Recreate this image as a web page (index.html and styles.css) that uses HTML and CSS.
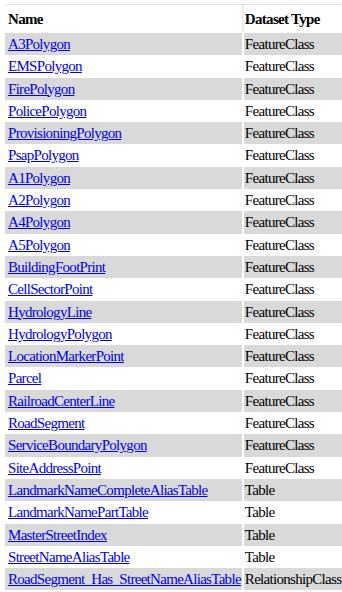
FILE: index.html
```html
<!DOCTYPE html>
<html>
<head>
<meta charset="utf-8">
<link rel="stylesheet" href="styles.css">
</head>
<body>
<table class="ds">
<thead>
<tr><th class="c1">Name</th><th class="c2">Dataset Type</th></tr>
</thead>
<tbody>
<tr class="odd"><td class="c1"><a href="#">A3Polygon</a></td><td class="c2">FeatureClass</td></tr>
<tr><td class="c1"><a href="#">EMSPolygon</a></td><td class="c2">FeatureClass</td></tr>
<tr class="odd"><td class="c1"><a href="#">FirePolygon</a></td><td class="c2">FeatureClass</td></tr>
<tr><td class="c1"><a href="#">PolicePolygon</a></td><td class="c2">FeatureClass</td></tr>
<tr class="odd"><td class="c1"><a href="#">ProvisioningPolygon</a></td><td class="c2">FeatureClass</td></tr>
<tr><td class="c1"><a href="#">PsapPolygon</a></td><td class="c2">FeatureClass</td></tr>
<tr class="odd"><td class="c1"><a href="#">A1Polygon</a></td><td class="c2">FeatureClass</td></tr>
<tr><td class="c1"><a href="#">A2Polygon</a></td><td class="c2">FeatureClass</td></tr>
<tr class="odd"><td class="c1"><a href="#">A4Polygon</a></td><td class="c2">FeatureClass</td></tr>
<tr><td class="c1"><a href="#">A5Polygon</a></td><td class="c2">FeatureClass</td></tr>
<tr class="odd"><td class="c1"><a href="#">BuildingFootPrint</a></td><td class="c2">FeatureClass</td></tr>
<tr><td class="c1"><a href="#">CellSectorPoint</a></td><td class="c2">FeatureClass</td></tr>
<tr class="odd"><td class="c1"><a href="#">HydrologyLine</a></td><td class="c2">FeatureClass</td></tr>
<tr><td class="c1"><a href="#">HydrologyPolygon</a></td><td class="c2">FeatureClass</td></tr>
<tr class="odd"><td class="c1"><a href="#">LocationMarkerPoint</a></td><td class="c2">FeatureClass</td></tr>
<tr><td class="c1"><a href="#">Parcel</a></td><td class="c2">FeatureClass</td></tr>
<tr class="odd"><td class="c1"><a href="#">RailroadCenterLine</a></td><td class="c2">FeatureClass</td></tr>
<tr><td class="c1"><a href="#">RoadSegment</a></td><td class="c2">FeatureClass</td></tr>
<tr class="odd"><td class="c1"><a href="#">ServiceBoundaryPolygon</a></td><td class="c2">FeatureClass</td></tr>
<tr><td class="c1"><a href="#">SiteAddressPoint</a></td><td class="c2">FeatureClass</td></tr>
<tr class="odd"><td class="c1"><a href="#">LandmarkNameCompleteAliasTable</a></td><td class="c2">Table</td></tr>
<tr><td class="c1"><a href="#">LandmarkNamePartTable</a></td><td class="c2">Table</td></tr>
<tr class="odd"><td class="c1"><a href="#">MasterStreetIndex</a></td><td class="c2">Table</td></tr>
<tr><td class="c1"><a href="#">StreetNameAliasTable</a></td><td class="c2">Table</td></tr>
<tr class="odd"><td class="c1"><a href="#">RoadSegment_Has_StreetNameAliasTable</a></td><td class="c2">RelationshipClass</td></tr>
</tbody>
</table>
</body>
</html>
```

FILE: styles.css
```css
html, body {
  margin: 0;
  padding: 0;
  background: #ffffff;
}
body {
  padding: 4px 0 0 5px;
  font-family: "Liberation Serif", "Times New Roman", serif;
  font-size: 15px;
  letter-spacing: -0.7px;
  color: #000;
}
.ds {
  border-collapse: separate;
  border-spacing: 0;
  border-top: 1px solid #e2e2e2;
  white-space: nowrap;
}
.ds th {
  text-align: left;
  font-weight: bold;
  line-height: 16px;
  padding: 6px 1px 6px 3px;
  height: 16px;
}
.ds th.c1 {
  border-right: 2px solid #ececec;
}
.ds td {
  line-height: 16.3px;
  padding: 3px 1px 3px 3px;
}
.ds td.c1 {
  border-right: 2px solid #ffffff;
}
.ds .c2 {
  padding-left: 1px;
  padding-right: 2px;
}
.ds tr.odd td {
  background: #d9d9d9;
}
.ds a {
  color: #0000ee;
  text-decoration: underline;
}
```
